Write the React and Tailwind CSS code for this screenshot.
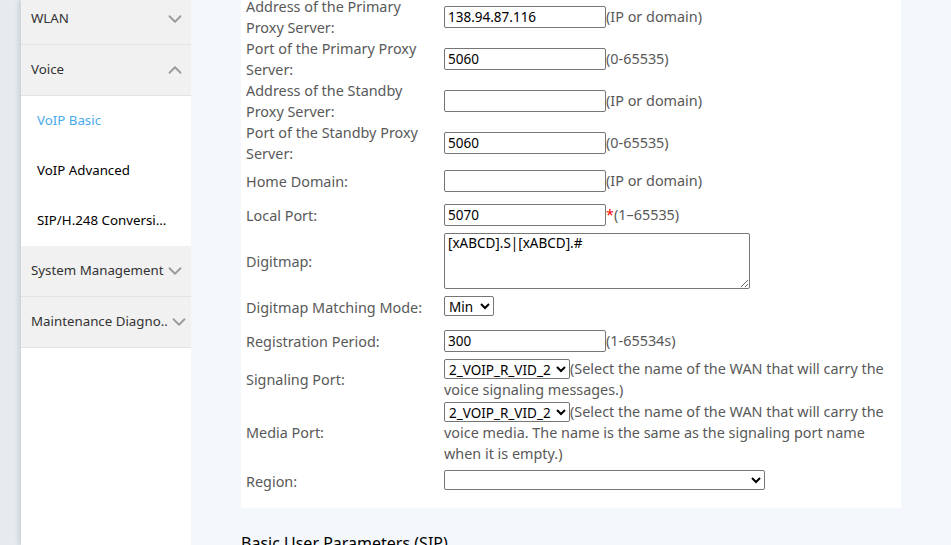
import React from 'react';
import { ChevronDown, ChevronUp } from 'lucide-react';

const font = { fontFamily: '"Noto Sans", "Open Sans", sans-serif' };

const inputCls =
  'h-[22px] w-[162px] border border-[#767676] rounded-[2px] bg-white px-[3px] text-[13.5px] text-black outline-none';

const selectCls =
  'h-[20px] border border-[#767676] rounded-[2px] bg-white text-[13.5px] text-black align-top';

const NavHeader = ({ label, open }) => (
  <div className="flex h-[51px] items-center justify-between border-b border-[#e2e2e2] bg-[#f1f1f1] pl-[10px] pr-[5px]">
    <span className="whitespace-nowrap text-[13.3px] text-[#333]">{label}</span>
    {open ? (
      <ChevronUp size={22} strokeWidth={2} className="shrink-0 text-[#9a9a9a]" />
    ) : (
      <ChevronDown size={22} strokeWidth={2} className="shrink-0 text-[#9a9a9a]" />
    )}
  </div>
);

const NavItem = ({ label, active }) => (
  <div
    className={
      'flex h-[50px] items-center whitespace-nowrap pl-[16px] text-[13.3px] ' +
      (active ? 'text-[#4aaaf0]' : 'text-black')
    }
  >
    {label}
  </div>
);

const Row = ({ label, children, className = '' }) => (
  <div className={'flex items-center ' + className}>
    <div className="w-[198px] shrink-0 pr-2 leading-[21px]">{label}</div>
    <div className="min-w-0 flex-1">{children}</div>
  </div>
);

const Field = ({ value = '', hint, required }) => (
  <div className="flex items-center">
    <input className={inputCls} defaultValue={value} />
    {required && <span className="text-[#ff0000]">*</span>}
    {hint && <span>{hint}</span>}
  </div>
);

export default function App() {
  return (
    <div className="flex h-[545px] w-full overflow-hidden bg-[#f4f7fb]" style={font}>
      {/* left strip */}
      <div className="w-[21px] shrink-0 bg-[#e5ebef]" />

      {/* Sidebar */}
      <aside className="relative w-[170px] shrink-0 bg-white shadow-[-3px_0_4px_rgba(0,0,0,0.1)]">
        <div className="-mt-[6px]">
          <NavHeader label="WLAN" />
          <NavHeader label="Voice" open />
          <NavItem label="VoIP Basic" active />
          <NavItem label="VoIP Advanced" />
          <NavItem label="SIP/H.248 Conversi..." />
          <NavHeader label="System Management" />
          <NavHeader label="Maintenance Diagno.." />
        </div>
      </aside>

      {/* Main */}
      <main className="flex-1 px-[50px]">
        <div className="-mt-[4px] bg-white pl-[5px] pr-[5px] pb-[10px] text-[14.4px] text-[#595959]">
          <Row label={<>Address of the Primary<br />Proxy Server:</>} className="h-[42px]">
            <Field value="138.94.87.116" hint="(IP or domain)" />
          </Row>
          <Row label={<>Port of the Primary Proxy<br />Server:</>} className="h-[42px]">
            <Field value="5060" hint="(0-65535)" />
          </Row>
          <Row label={<>Address of the Standby<br />Proxy Server:</>} className="h-[42px]">
            <Field hint="(IP or domain)" />
          </Row>
          <Row label={<>Port of the Standby Proxy<br />Server:</>} className="h-[42px]">
            <Field value="5060" hint="(0-65535)" />
          </Row>
          <Row label="Home Domain:" className="h-[34px]">
            <Field hint="(IP or domain)" />
          </Row>
          <Row label="Local Port:" className="h-[34px]">
            <Field value="5070" hint="(1–65535)" required />
          </Row>
          <Row label="Digitmap:" className="h-[58px]">
            <textarea
              className="block h-[56px] w-[306px] border border-[#767676] rounded-[2px] bg-white px-[3px] text-[13.5px] leading-[18px] text-black outline-none"
              defaultValue="[xABCD].S|[xABCD].#"
            />
          </Row>
          <Row label="Digitmap Matching Mode:" className="h-[34px]">
            <select className={selectCls + ' w-[50px]'} defaultValue="Min">
              <option>Min</option>
              <option>Max</option>
            </select>
          </Row>
          <Row label="Registration Period:" className="h-[34px]">
            <Field value="300" hint="(1-65534s)" />
          </Row>
          <Row label="Signaling Port:" className="h-[42px]">
            <div className="leading-[21px]">
              <select className={selectCls + ' mt-[1px] w-[126px]'}>
                <option>2_VOIP_R_VID_2</option>
              </select>
              (Select the name of the WAN that will carry the voice signaling messages.)
            </div>
          </Row>
          <Row label="Media Port:" className="h-[64px]">
            <div className="leading-[21px]">
              <select className={selectCls + ' mt-[1px] w-[126px]'}>
                <option>2_VOIP_R_VID_2</option>
              </select>
              (Select the name of the WAN that will carry the voice media. The name is the same as the signaling port name when it is empty.)
            </div>
          </Row>
          <Row label="Region:" className="h-[34px]">
            <select className={selectCls + ' w-[321px]'}>
              <option></option>
            </select>
          </Row>
        </div>

        <h2 className="mt-[24px] text-[16px] leading-[22px] text-black">Basic User Parameters (SIP)</h2>
      </main>
    </div>
  );
}
